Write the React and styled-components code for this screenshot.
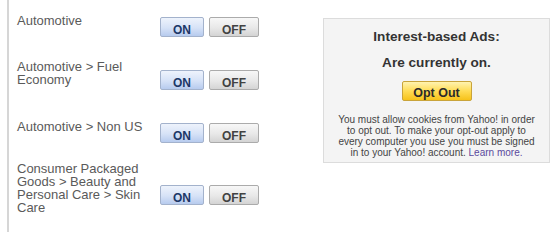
import React from 'react'
import styled, { createGlobalStyle } from 'styled-components'

const GlobalStyle = createGlobalStyle`
  html, body {
    margin: 0;
    padding: 0;
    background: #fff;
  }
  body {
    font-family: "Liberation Sans", Arial, sans-serif;
  }
`

const Page = styled.div`
  display: flex;
  align-items: flex-start;
  width: 560px;
  height: 232px;
  overflow: hidden;
`

const Categories = styled.div`
  flex: 0 0 300px;
  box-sizing: border-box;
  margin-left: 7px;
  min-height: 232px;
  border-left: 2px solid #d6d6d6;
  padding: 3px 0 0 8px;
  display: flex;
  flex-direction: column;
  gap: 19px;
`

const Row = styled.div`
  display: flex;
  align-items: center;
`

const Label = styled.div`
  flex: 0 0 132px;
  font-size: 13px;
  line-height: 13px;
  color: #5a5a5a;
`

const Toggle = styled.div`
  display: flex;
  gap: 5px;
  margin: 14px 0 0 11px;
`

const ToggleButton = styled.button`
  box-sizing: border-box;
  width: ${p => (p.$on ? 44 : 50)}px;
  height: 20px;
  padding: 6px 0 0;
  margin: 0;
  font-family: "Liberation Sans", Arial, sans-serif;
  font-size: 12px;
  font-weight: bold;
  line-height: 12px;
  text-align: center;
  border: 1px solid ${p => (p.$on ? '#a3b2cc' : '#ababab')};
  border-radius: 2px;
  color: ${p => (p.$on ? '#1d3767' : '#424242')};
  background: ${p =>
    p.$on
      ? 'linear-gradient(#eef3fc 0%, #d6e2f7 55%, #b7cbee 100%)'
      : 'linear-gradient(#f7f7f7 0%, #e8e8e8 55%, #d4d4d4 100%)'};
`

const Panel = styled.div`
  box-sizing: border-box;
  width: 227px;
  height: 145px;
  margin: 18px 0 0 16px;
  padding: 10px 0 0;
  background: #f4f4f4;
  border: 1px solid #dcdcdc;
  display: flex;
  flex-direction: column;
  align-items: center;
`

const Heading = styled.div`
  font-size: 13.6px;
  font-weight: bold;
  line-height: 16px;
  color: #333;
  margin-bottom: ${p => p.$gap || 0}px;
`

const OptOut = styled.button`
  box-sizing: border-box;
  width: 70px;
  height: 20px;
  margin: 0 0 13px;
  padding: 5px 0 0;
  font-family: "Liberation Sans", Arial, sans-serif;
  font-size: 12.5px;
  font-weight: bold;
  line-height: 13px;
  color: #2a2a2a;
  border: 1px solid #c9a43a;
  border-radius: 2px;
  background: linear-gradient(#fff3b0 0%, #ffdc55 50%, #f6c21a 100%);
`

const Note = styled.p`
  width: 202px;
  margin: 0;
  font-size: 10px;
  line-height: 11px;
  text-align: center;
  color: #444;
`

const LearnMore = styled.a`
  color: #5b4a9e;
  text-decoration: none;
`

const categories = [
  'Automotive',
  'Automotive > Fuel Economy',
  'Automotive > Non US',
  'Consumer Packaged Goods > Beauty and Personal Care > Skin Care',
]

export default function App() {
  return <>
    <GlobalStyle />
    <Page>
      <Categories>
        {categories.map(name => (
          <Row key={name}>
            <Label>{name}</Label>
            <Toggle>
              <ToggleButton $on>ON</ToggleButton>
              <ToggleButton>OFF</ToggleButton>
            </Toggle>
          </Row>
        ))}
      </Categories>
      <Panel>
        <Heading $gap={10}>Interest-based Ads:</Heading>
        <Heading $gap={10}>Are currently on.</Heading>
        <OptOut>Opt Out</OptOut>
        <Note>
          You must allow cookies from Yahoo! in order to opt out. To make your opt-out apply to
          every computer you use you must be signed in to your Yahoo! account. <LearnMore href="#">Learn more.</LearnMore>
        </Note>
      </Panel>
    </Page>
  </>
}
